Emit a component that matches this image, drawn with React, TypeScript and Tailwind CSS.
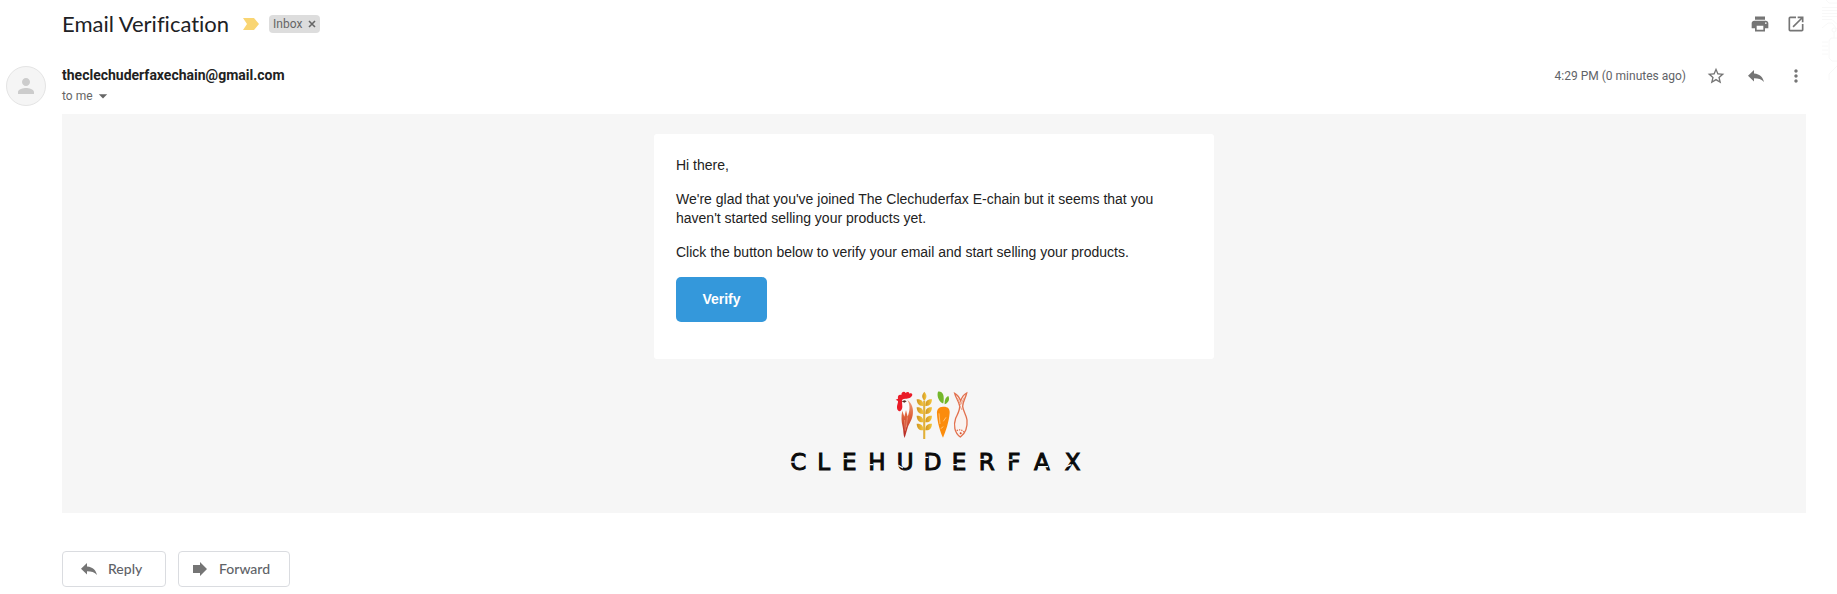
import React from "react";
import {
  MdPrint,
  MdOpenInNew,
  MdStarBorder,
  MdReply,
  MdMoreVert,
  MdArrowDropDown,
  MdPerson,
} from "react-icons/md";

function IconButton({ label, children }: { label: string; children: React.ReactNode }) {
  return (
    <button type="button" aria-label={label} className="flex size-5 items-center justify-center text-[#757575]">
      {children}
    </button>
  );
}

function ReplyArrow() {
  return (
    <svg viewBox="0 0 16 12" className="h-3 w-4" fill="#757575" aria-hidden="true">
      <path d="M6 3.4V0L0 5.800l6 5.800V8.200c4.300 0 7.600.9 10 3.800-.9-4.600-3.800-8-10-8.600z" />
    </svg>
  );
}

function ForwardArrow() {
  return (
    <svg viewBox="0 0 14 14" className="size-3.5" fill="#757575" aria-hidden="true">
      <path d="M0 3h7V0l7 7-7 7v-3H0z" />
    </svg>
  );
}

function CircuitPattern() {
  return (
    <svg
      viewBox="0 0 15 84"
      className="pointer-events-none absolute right-0 top-0 h-[84px] w-[15px]"
      fill="none"
      stroke="#f8f8f8"
      aria-hidden="true"
    >
      <path d="M4 0l3 3h8M0 7.500h15M0 10.500h15M0 13.500h15M0 16.500h15M0 19.500h10l5 5M0 28l6-5h4l5 6M12 32v6M15 38H9l-2 3v17l3 3h5M0 42h6M0 46h6M0 50h6M0 54h6M15 66l-8 8v6" />
      <circle cx="12" cy="30" r="2" />
    </svg>
  );
}

const leafRows = [86, 110, 135, 159];

function Logo() {
  return (
    <svg viewBox="42 60 900 264" className="h-[88px] w-[300px]" role="img" aria-label="Clehuderfax">
      <defs>
        <linearGradient id="feather" x1="0" y1="0" x2="0" y2="1">
          <stop offset="0" stopColor="#f0a080" />
          <stop offset="0.4" stopColor="#e0643c" />
          <stop offset="1" stopColor="#b02424" />
        </linearGradient>
        <linearGradient id="wheat" x1="0" y1="0" x2="1" y2="0">
          <stop offset="0" stopColor="#cf941f" />
          <stop offset="1" stopColor="#f5c83f" />
        </linearGradient>
      </defs>

      <path d="M396 100c8-12 20-10 25 2 6 14 4 30-2 40l-12-16-10 14c2-12 2-22-1-40z" fill="#fbfbfb" />
      <path
        d="M384 86c-2-10 4-14 10-11 0-9 9-13 13-6 4-5 11-4 11 2 4-3 9-1 9 4-3 9-12 11-21 11-8 0-11 3-10 9l1 16c-1 15-14 17-16 3-1-9 4-15 3-21l-7-4z"
        fill="#ea1c28"
      />
      <path d="M395 94l9-3 6 3-7 4z" fill="#5a2a20" />
      <path
        d="M412 90c15 10 19 28 16 46-3 17-11 25-15 37l-9 31c-5-10-3-22-6-34-4-16-5-30-1-48l6 18 5-20 5 20c6-16 9-34-1-50z"
        fill="url(#feather)"
      />
      <path d="M404 150l2 32M412 142l-3 30" stroke="#f4a586" strokeWidth="2" fill="none" />

      <g fill="url(#wheat)">
        <path d="M463 65c9 10 8 18 0 27-8-9-9-17 0-27z" />
        {leafRows.map((y) => (
          <g key={y}>
            <path d={`M460 ${y + 22}c-15 1-19-8-20-20 14-1 21 6 20 20z`} />
            <path d={`M466 ${y + 22}c15 1 19-8 20-20-14-1-21 6-20 20z`} />
          </g>
        ))}
        <path d="M460 92h6v115h-6z" />
      </g>

      <path d="M517 100c-12-9-17-22-13-35 14-2 20 10 16 35z" fill="#74b72b" />
      <path d="M524 103c-1-12 3-22 11-25 5 10 1 20-11 25z" fill="#74b72b" />
      <path d="M519 110c13-1 21 5 20 18-2 28-12 56-20 75-9-19-17-46-18-71-1-15 5-21 18-22z" fill="#fb8c0c" />
      <path d="M507 130l3 32M528 142l-8 12M512 176l8-6" stroke="#ffc274" strokeWidth="3" fill="none" />

      <g fill="none" stroke="#e2714e" strokeWidth="4">
        <path d="M571 201c-18-13-21-36-14-56 6-14 13-24 12-37-3-15-12-25-15-38 12 7 15 14 18 23 3-10 7-18 18-24-3 15-12 26-12 40 1 14 11 25 13 41 2 22-5 40-20 51z" fill="#faf3f0" />
        <path d="M562 84l10 20M583 82l-11 22M570 108l6 12" strokeWidth="3" stroke="#eda084" />
        <path d="M560 182c8-4 16-3 22 4" strokeDasharray="4 3" />
      </g>
      <circle cx="572" cy="190" r="3" fill="#d9502b" />

      <text
        x="61 142 216 295 380 461 545 626 712 792 884"
        y="299"
        fontSize="69"
        fill="#0a0a0a"
        stroke="#0a0a0a"
        strokeWidth="3"
        fontFamily="'DejaVu Sans', Verdana, sans-serif"
      >
        CLEHUDERFAX
      </text>
      <g stroke="#f6f6f6" strokeWidth="4">
        <path d="M60 276h14M220 266h12M298 284h12M385 286l14 8M463 262h12M549 284h12M630 268h12M716 270h12M804 290h30M888 290l16-6" />
      </g>
    </svg>
  );
}

export default function App() {
  return (
    <main className="relative bg-white pr-[31px] font-['Roboto',sans-serif] text-[#222222]">
      <CircuitPattern />

      <header className="flex h-12 items-center pl-[62px]">
        <h1 className="font-['Lato',sans-serif] text-[22px] leading-7 text-[#202124] [font-variant-ligatures:none]">
          Email Verification
        </h1>
        <svg viewBox="0 0 16 12" className="ml-3.5 h-3 w-4" fill="#f9d573" aria-hidden="true">
          <path d="M0 0h11l5 6-5 6H0l4-6z" />
        </svg>
        <div className="ml-2.5 flex h-[18px] items-center gap-1.5 rounded bg-[#dddddd] px-1 text-xs text-[#666666]">
          <span>Inbox</span>
          <button type="button" aria-label="Remove label Inbox">
            <svg viewBox="0 0 8 8" className="size-2" fill="none" stroke="#666666" strokeWidth="1.6" aria-hidden="true">
              <path d="M1 1l6 6M7 1L1 7" />
            </svg>
          </button>
        </div>
        <div className="ml-auto flex gap-4">
          <IconButton label="Print all"><MdPrint className="size-5" /></IconButton>
          <IconButton label="Open in new window"><MdOpenInNew className="size-5" /></IconButton>
        </div>
      </header>

      <div className="flex">
        <div className="w-[62px] shrink-0 pl-1.5 pt-[18px]">
          <div className="flex size-10 items-center justify-center rounded-full border border-[#e4e4e4] bg-[#f5f5f5]">
            <MdPerson className="size-6 text-[#cccccc]" />
          </div>
        </div>

        <article className="min-w-0 flex-1">
          <div className="flex h-[66px] items-start justify-between pt-[17px]">
            <div>
              <h2 className="text-sm font-bold leading-5">theclechuderfaxechain@gmail.com</h2>
              <button type="button" className="flex items-center text-xs leading-[22px] text-[#666666]">
                to me
                <MdArrowDropDown className="size-5" />
              </button>
            </div>
            <div className="flex items-center gap-5">
              <time className="text-xs leading-[22px] text-[#5f6368]">4:29 PM (0 minutes ago)</time>
              <IconButton label="Star"><MdStarBorder className="size-5" /></IconButton>
              <IconButton label="Reply"><ReplyArrow /></IconButton>
              <IconButton label="More"><MdMoreVert className="size-5" /></IconButton>
            </div>
          </div>

          <div className="flex flex-col items-center bg-[#f6f6f6] pb-[35px] pt-5 font-['Liberation_Sans',sans-serif] text-sm leading-[19px]">
            <section className="w-full max-w-[560px] rounded-[3px] bg-white px-[22px] pb-[37px] pt-[22px]">
              <p className="mb-[15px]">Hi there,</p>
              <p className="mb-[15px]">
                We're glad that you've joined The Clechuderfax E-chain but it seems that you haven't started selling your
                products yet.
              </p>
              <p className="mb-[15px]">Click the button below to verify your email and start selling your products.</p>
              <a
                href="#verify"
                className="flex h-[45px] w-[91px] items-center justify-center rounded-[5px] bg-[#3498db] font-bold text-white"
              >
                Verify
              </a>
            </section>
            <div className="mt-[31px]">
              <Logo />
            </div>
          </div>

          <div className="flex gap-3 pt-[38px] font-['Lato',sans-serif] text-sm font-medium text-[#5f6368]">
            <button type="button" className="flex h-9 w-[104px] items-center gap-[11px] rounded border border-[#dadce0] pl-[18px]">
              <ReplyArrow />
              Reply
            </button>
            <button type="button" className="flex h-9 w-28 items-center gap-3 rounded border border-[#dadce0] pl-3.5">
              <ForwardArrow />
              Forward
            </button>
          </div>
        </article>
      </div>
    </main>
  );
}
